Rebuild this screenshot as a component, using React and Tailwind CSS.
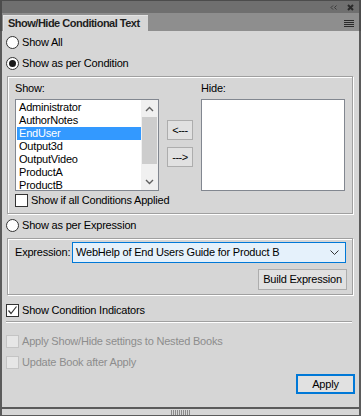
import React from "react";

const Radio = ({ checked }) => (
  <span className="w-[13px] h-[13px] rounded-full border border-[#333333] bg-white flex items-center justify-center shrink-0">
    {checked && <span className="w-[7px] h-[7px] rounded-full bg-[#1a1a1a]" />}
  </span>
);

const Check = ({ checked, disabled }) => (
  <span
    className={
      "w-[13px] h-[13px] border flex items-center justify-center shrink-0 " +
      (disabled ? "border-[#c4c4c4] bg-[#e6e6e6]" : "border-[#333333] bg-white")
    }
  >
    {checked && (
      <svg width="11" height="11" viewBox="0 0 11 11">
        <path d="M1.5 5.5 L4 8.5 L9.5 1.5" fill="none" stroke="#333" strokeWidth="1.2" />
      </svg>
    )}
  </span>
);

const Btn = ({ children, className }) => (
  <div
    className={
      "h-[20px] bg-[#e1e1e1] border border-[#adadad] flex items-center justify-center " +
      className
    }
  >
    {children}
  </div>
);

const conditions = [
  "Administrator",
  "AuthorNotes",
  "EndUser",
  "Output3d",
  "OutputVideo",
  "ProductA",
  "ProductB",
];

export default function App() {
  return (
    <div className="w-[361px] h-[416px] flex flex-col bg-[#d6d6d6] font-['Liberation_Sans',Arial,sans-serif] text-[11px] tracking-[-0.2px] leading-[13px] text-black overflow-hidden select-none">
      {/* title bar */}
      <div className="h-[13px] bg-[#6f6f6f] border-t border-x-2 border-[#4c4c4c] flex items-center justify-end pr-[5px] gap-[10px]">
        <svg width="7" height="5" viewBox="0 0 7 5">
          <path d="M3 0.5 L1 2.5 L3 4.5 M6.5 0.5 L4.5 2.5 L6.5 4.5" fill="none" stroke="#3a3a3a" strokeWidth="1" />
        </svg>
        <svg width="7" height="7" viewBox="0 0 7 7">
          <path d="M1 1 L6 6 M6 1 L1 6" stroke="#2a2a2a" strokeWidth="2" />
        </svg>
      </div>

      {/* tab row */}
      <div className="h-[18px] bg-[#8e8e8e] border-x-2 border-[#4c4c4c] flex items-end pl-[1px] pr-[5px]">
        <div className="h-[16px] w-[145px] bg-[#d6d6d6] border-t border-l border-[#e4e4e4] flex items-center pl-[4px] font-bold tracking-[-0.5px] text-[#1e1e1e]">
          Show/Hide Conditional Text
        </div>
        <div className="ml-auto mb-[4px] flex flex-col gap-[1px]">
          <span className="block w-[10px] h-[1px] bg-[#2a2a2a]" />
          <span className="block w-[10px] h-[1px] bg-[#2a2a2a]" />
          <span className="block w-[10px] h-[1px] bg-[#2a2a2a]" />
          <span className="block w-[10px] h-[1px] bg-[#2a2a2a]" />
        </div>
      </div>

      {/* content */}
      <div className="flex-1 flex flex-col border-x-2 border-[#5b5b5b] pt-[1px]">
        <div className="h-[21px] flex items-center gap-[3px] pl-[4px]">
          <Radio />
          <span>Show All</span>
        </div>
        <div className="h-[21px] flex items-center gap-[3px] pl-[4px]">
          <Radio checked />
          <span>Show as per Condition</span>
        </div>

        {/* condition group */}
        <div className="mt-[2px] ml-[5px] w-[346px] border border-[#a0a0a0] shadow-[inset_1px_1px_0_#ffffff,1px_1px_0_#ffffff] pl-[7px] pr-[7px] pb-[6px]">
          <div className="flex">
            <div className="w-[144px] flex flex-col">
              <div className="h-[22px] flex items-center">Show:</div>
              <div className="h-[92px] border border-[#828790] bg-white flex overflow-hidden">
                <div className="flex-1 pt-[1px] pl-[1px]">
                  {conditions.map((c) => (
                    <div
                      key={c}
                      className={
                        "h-[13px] pl-[2px] flex items-center whitespace-nowrap " +
                        (c === "EndUser" ? "bg-[#3399ff] text-white" : "")
                      }
                    >
                      {c}
                    </div>
                  ))}
                </div>
                <div className="w-[17px] bg-[#f0f0f0] flex flex-col items-center">
                  <div className="h-[17px] flex items-center justify-center">
                    <svg width="9" height="6" viewBox="0 0 9 6">
                      <path d="M1 5 L4.5 1.5 L8 5" fill="none" stroke="#606060" strokeWidth="1.4" />
                    </svg>
                  </div>
                  <div className="h-[47px] w-[15px] bg-[#cdcdcd]" />
                  <div className="mt-auto h-[17px] flex items-center justify-center">
                    <svg width="9" height="6" viewBox="0 0 9 6">
                      <path d="M1 1 L4.5 4.5 L8 1" fill="none" stroke="#606060" strokeWidth="1.4" />
                    </svg>
                  </div>
                </div>
              </div>
            </div>

            <div className="w-[26px] ml-[8px] pt-[43px] flex flex-col gap-[7px]">
              <Btn className="tracking-[-0.5px]">&lt;---</Btn>
              <Btn className="tracking-[-0.5px]">---&gt;</Btn>
            </div>

            <div className="w-[144px] ml-[8px] flex flex-col">
              <div className="h-[22px] flex items-center">Hide:</div>
              <div className="h-[92px] border border-[#828790] bg-white" />
            </div>
          </div>
          <div className="mt-[3px] flex items-center gap-[3px]">
            <Check />
            <span>Show if all Conditions Applied</span>
          </div>
        </div>

        <div className="h-[20px] mt-[1px] flex items-center gap-[3px] pl-[4px]">
          <Radio />
          <span>Show as per Expression</span>
        </div>

        {/* expression group */}
        <div className="mt-[3px] ml-[5px] w-[346px] border border-[#a0a0a0] shadow-[inset_1px_1px_0_#ffffff,1px_1px_0_#ffffff] pl-[7px] pr-[5px] pt-[3px] pb-[4px]">
          <div className="flex items-center">
            <span className="w-[57px]">Expression:</span>
            <div className="w-[274px] h-[21px] border border-[#0078d7] bg-[#e5f1fb] flex items-center pl-[3px] pr-[6px]">
              <span>WebHelp of End Users Guide for Product B</span>
              <svg className="ml-auto" width="9" height="6" viewBox="0 0 9 6">
                <path d="M0.5 0.5 L4.5 4.5 L8.5 0.5" fill="none" stroke="#333" strokeWidth="1" />
              </svg>
            </div>
          </div>
          <div className="mt-[6px] flex justify-end">
            <Btn className="w-[89px] h-[21px]">Build Expression</Btn>
          </div>
        </div>

        <div className="h-[20px] mt-[5px] flex items-center gap-[3px] pl-[4px]">
          <Check checked />
          <span>Show Condition Indicators</span>
        </div>
        <div className="mt-[1px] ml-[4px] w-[346px] border-t border-b border-t-[#a0a0a0] border-b-[#ffffff]" />

        <div className="h-[21px] mt-[8px] flex items-center gap-[3px] pl-[4px] text-[#8d8d8d]">
          <Check disabled />
          <span>Apply Show/Hide settings to Nested Books</span>
        </div>
        <div className="h-[21px] flex items-center gap-[3px] pl-[4px] text-[#8d8d8d]">
          <Check disabled />
          <span>Update Book after Apply</span>
        </div>

        <div className="mt-[1px] flex justify-end pr-[4px]">
          <div className="w-[59px] h-[20px] border-2 border-[#0078d7] bg-[#e1e1e1] flex items-center justify-center">
            Apply
          </div>
        </div>
      </div>

      {/* bottom gripper */}
      <div className="h-[9px] border-t-2 border-b border-x-2 border-[#5b5b5b] bg-[#d6d6d6] flex items-center justify-center">
        <div className="flex gap-[1px]">
          {[0, 1, 2, 3, 4, 5, 6, 7, 8, 9].map((i) => (
            <span key={i} className="block w-[1px] h-[5px] bg-[#8a8a8a]" />
          ))}
        </div>
      </div>
    </div>
  );
}
